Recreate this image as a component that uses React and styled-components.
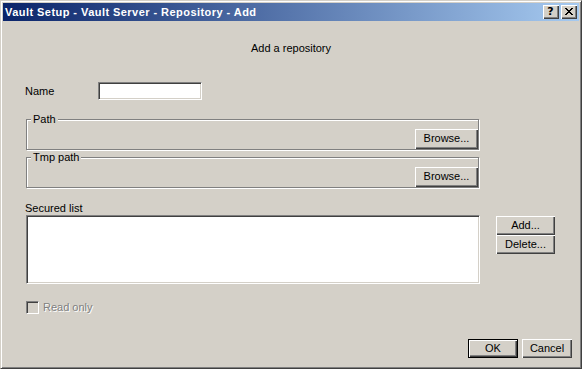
import React from "react";
import styled, { createGlobalStyle } from "styled-components";

/* ─── Win2000 palette ─────────────────────────────────────────── */
const FACE = "#d4d0c8";
const SHADOW = "#808080";
const DARK = "#404040";
const LIGHT = "#ffffff";

const GlobalStyle = createGlobalStyle`
  html, body { margin: 0; padding: 0; background: ${FACE}; }
  body { font-family: "Liberation Sans", Arial, sans-serif; font-size: 11px; color: #000; }
  * { box-sizing: border-box; }
`;

/* ─── Window frame ────────────────────────────────────────────── */
const Window = styled.div`
  width: 582px; height: 369px;
  display: flex; flex-direction: column;
  background: ${FACE};
  border: 1px solid; border-color: ${FACE} ${DARK} ${DARK} ${FACE};
  box-shadow: inset 1px 1px 0 ${LIGHT}, inset -1px -1px 0 ${SHADOW};
  padding: 2px;
`;

const TitleBar = styled.div`
  height: 18px; flex-shrink: 0;
  display: flex; align-items: center; justify-content: space-between;
  padding: 0 2px 0 2px;
  background: linear-gradient(to right, #0a246a, #a6caf0);
`;

const TitleText = styled.span`
  color: #fff; font-weight: 700; font-size: 11px; line-height: 13px;
  letter-spacing: 0.45px; white-space: nowrap;
`;

const CaptionButtons = styled.div`
  display: flex; gap: 2px;
`;

const CaptionButton = styled.div`
  width: 16px; height: 14px;
  display: flex; align-items: center; justify-content: center;
  background: ${FACE};
  box-shadow: inset 1px 1px 0 ${LIGHT}, inset -1px -1px 0 ${DARK}, inset -2px -2px 0 ${SHADOW};
  font-family: "DejaVu Sans", sans-serif; font-weight: 700; font-size: 11px; line-height: 11px;
  padding: 0 1px 1px 0;
`;

/* ─── Client area ─────────────────────────────────────────────── */
const Client = styled.div`
  flex: 1; display: flex; flex-direction: column;
  padding-top: 21px;
`;

const Heading = styled.div`
  height: 13px; line-height: 13px; text-align: center;
`;

const Form = styled.div`
  display: flex; flex-direction: column;
  padding-left: 23px;
`;

const Row = styled.div`
  display: flex; align-items: ${({ $align }) => $align || "center"};
  margin-top: ${({ $top }) => $top}px;
`;

const Label = styled.span`
  line-height: 13px; margin-left: -1px;
  width: ${({ $width }) => ($width ? `${$width}px` : "auto")};
  color: ${({ $disabled }) => ($disabled ? SHADOW : "#000")};
  text-shadow: ${({ $disabled }) => ($disabled ? `1px 1px 0 ${LIGHT}` : "none")};
`;

const Sunken = styled.div`
  width: ${({ $w }) => $w}px; height: ${({ $h }) => $h}px;
  background: ${({ $disabled }) => ($disabled ? FACE : "#fff")};
  border: 1px solid; border-color: ${SHADOW} ${LIGHT} ${LIGHT} ${SHADOW};
  box-shadow: inset 1px 1px 0 ${DARK}, inset -1px -1px 0 ${FACE};
`;

const Group = styled.div`
  position: relative;
  width: 453px; height: 31px;
  margin-top: ${({ $top }) => $top}px;
  display: flex; justify-content: flex-end; align-items: flex-end;
  border: 1px solid ${SHADOW};
  box-shadow: inset 1px 1px 0 ${LIGHT}, 1px 1px 0 ${LIGHT};
`;

const Legend = styled.span`
  position: absolute; left: 4px; top: -7px;
  padding: 0 2px; line-height: 13px;
  background: ${FACE};
`;

const Button = styled.div`
  width: ${({ $w }) => $w}px; height: ${({ $h }) => $h || 20}px;
  display: flex; align-items: center; justify-content: center;
  background: ${FACE}; line-height: 13px;
  border: ${({ $default }) => ($default ? "1px solid #000" : "none")};
  box-shadow: inset 1px 1px 0 ${LIGHT}, inset -1px -1px 0 ${DARK}, inset -2px -2px 0 ${SHADOW};
  padding-bottom: 1px;
`;

const SideButtons = styled.div`
  display: flex; flex-direction: column;
  margin: 1px 0 0 16px;
`;

const Footer = styled.div`
  display: flex; justify-content: flex-end; gap: 4px;
  margin-top: 25px; padding-right: 7px;
`;

const CloseGlyph = () => (
  <svg width="8" height="7" viewBox="0 0 8 7" shapeRendering="crispEdges">
    <path d="M0 0h2v1H0zM6 0h2v1H6zM1 1h2v1H1zM5 1h2v1H5zM2 2h4v1H2zM3 3h2v1H3zM2 4h4v1H2zM1 5h2v1H1zM5 5h2v1H5zM0 6h2v1H0zM6 6h2v1H6z" fill="#000" />
  </svg>
);

export default function App() {
  return (
    <>
      <GlobalStyle />
      <Window>
        <TitleBar>
          <TitleText>Vault Setup - Vault Server - Repository - Add</TitleText>
          <CaptionButtons>
            <CaptionButton>?</CaptionButton>
            <CaptionButton><CloseGlyph /></CaptionButton>
          </CaptionButtons>
        </TitleBar>

        <Client>
          <Heading>Add a repository</Heading>

          <Form>
            <Row $top={27}>
              <Label $width={73}>Name</Label>
              <Sunken $w={104} $h={18} />
            </Row>

            <Group $top={19}>
              <Legend>Path</Legend>
              <Button $w={63}>Browse...</Button>
            </Group>

            <Group $top={7}>
              <Legend>Tmp path</Legend>
              <Button $w={63}>Browse...</Button>
            </Group>

            <Row $top={14}>
              <Label>Secured list</Label>
            </Row>

            <Row $top={0} $align="flex-start">
              <Sunken $w={454} $h={69} />
              <SideButtons>
                <Button $w={59} $h={19}>Add...</Button>
                <Button $w={59} $h={19}>Delete...</Button>
              </SideButtons>
            </Row>

            <Row $top={17}>
              <Sunken $w={13} $h={13} $disabled />
              <Label $disabled style={{ marginLeft: 4 }}>Read only</Label>
            </Row>
          </Form>

          <Footer>
            <Button $w={50} $h={19} $default>OK</Button>
            <Button $w={50} $h={19}>Cancel</Button>
          </Footer>
        </Client>
      </Window>
    </>
  );
}
